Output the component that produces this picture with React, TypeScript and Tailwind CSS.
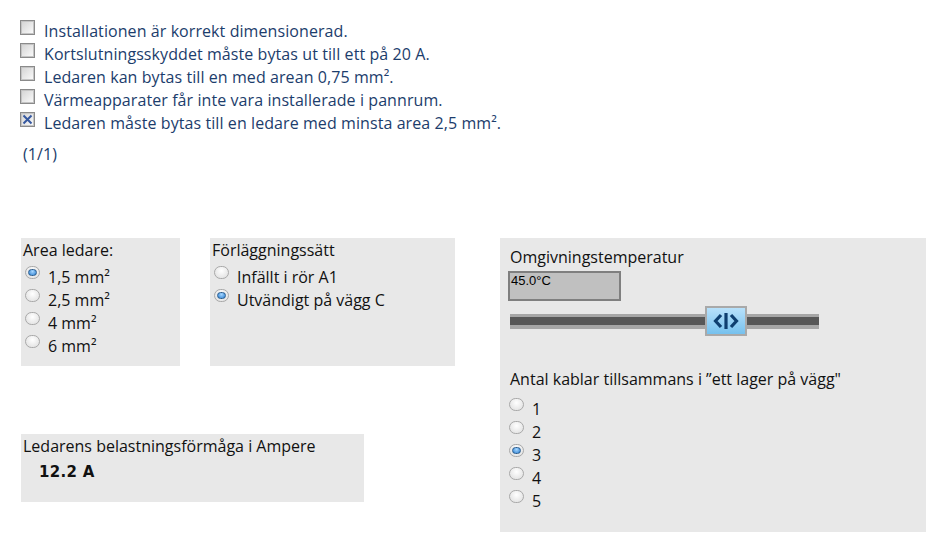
import React from 'react';

const options = [
  { text: 'Installationen är korrekt dimensionerad.', checked: false },
  { text: 'Kortslutningsskyddet måste bytas ut till ett på 20 A.', checked: false },
  { text: 'Ledaren kan bytas till en med arean 0,75 mm².', checked: false },
  { text: 'Värmeapparater får inte vara installerade i pannrum.', checked: false },
  { text: 'Ledaren måste bytas till en ledare med minsta area 2,5 mm².', checked: true },
];

const areas = ['1,5 mm²', '2,5 mm²', '4 mm²', '6 mm²'];
const placements = ['Infällt i rör A1', 'Utvändigt på vägg C'];
const cables = ['1', '2', '3', '4', '5'];

const Checkbox = ({ checked }: { checked: boolean }) => (
  <span className="relative block w-[15px] h-[15px] shrink-0 border border-[#8a8a8a] shadow-[inset_0_0_0_1px_#c4c4c4] bg-[linear-gradient(135deg,#d2d2d2,#fcfcfc)]">
    {checked && (
      <svg viewBox="0 0 13 13" className="absolute inset-0 w-[13px] h-[13px]">
        <path d="M2.5 2.5 L10.5 10.5 M10.5 2.5 L2.5 10.5" stroke="#3558a0" strokeWidth="2" />
      </svg>
    )}
  </span>
);

const Radio = ({ checked }: { checked: boolean }) => (
  <span className="flex items-center justify-center w-[15px] h-[13px] shrink-0 rounded-full border border-[#a9a9a9] bg-[radial-gradient(circle_at_50%_35%,#ffffff,#dcdcdc)]">
    {checked && (
      <span className="block w-[9px] h-[7px] rounded-full border border-[#2b5d8f] bg-[radial-gradient(circle_at_50%_30%,#a6d6ff,#2a7ed0)]" />
    )}
  </span>
);

const RadioRow = ({ label, checked }: { label: string; checked: boolean }) => (
  <div className="flex items-start h-[23px]">
    <span className="block mt-[4px]">
      <Radio checked={checked} />
    </span>
    <span className="ml-[8px] mt-[4px] leading-[23px]">{label}</span>
  </div>
);

const App = () => {
  return (
    <div className="w-[946px] h-[541px] bg-white overflow-hidden font-['Open_Sans',sans-serif] text-[16px]">
      <div className="pt-[20px] pl-[20px] text-[#1c3d6c] tracking-[0.08px]">
        {options.map((o, i) => (
          <div key={i} className="flex items-start h-[23px]">
            <Checkbox checked={o.checked} />
            <span className="ml-[9px] leading-[23px]">{o.text}</span>
          </div>
        ))}
        <div className="mt-[8px] ml-[3px] leading-[23px]">(1/1)</div>
      </div>

      <div className="flex mt-[72px] pl-[21px] text-[#111]">
        <div className="w-[434px]">
          <div className="flex">
            <div className="w-[159px] h-[128px] bg-[#e8e8e8] pl-[2px] pt-[1px]">
              <div className="leading-[23px]">Area ledare:</div>
              <div className="pl-[2px]">
                {areas.map((a, i) => (
                  <RadioRow key={a} label={a} checked={i === 0} />
                ))}
              </div>
            </div>
            <div className="ml-[30px] w-[245px] h-[128px] bg-[#e8e8e8] pl-[2px] pt-[1px]">
              <div className="leading-[23px]">Förläggningssätt</div>
              <div className="pl-[2px]">
                {placements.map((p, i) => (
                  <RadioRow key={p} label={p} checked={i === 1} />
                ))}
              </div>
            </div>
          </div>
          <div className="mt-[68px] w-[343px] h-[68px] bg-[#e8e8e8] pl-[2px] pt-[1px]">
            <div className="leading-[23px]">Ledarens belastningsförmåga i Ampere</div>
            <div className="pl-[16px] mt-[4px] font-['DejaVu_Sans',sans-serif] font-bold text-[15px] leading-[20px] tracking-[0.3px]">
              12.2 A
            </div>
          </div>
        </div>

        <div className="ml-[45px] w-[426px] h-[294px] bg-[#e8e8e8] pl-[10px] pt-[8px]">
          <div className="leading-[23px]">Omgivningstemperatur</div>
          <div className="-ml-[2px] mt-[2px] w-[113px] h-[30px] bg-[#c0c0c0] border-2 border-[#7f7f7f] pl-[1px] font-['Liberation_Sans',sans-serif] text-[13px] leading-[16px] text-black">
            45.0°C
          </div>
          <div className="relative mt-[5px] w-[309px] h-[30px] flex items-center">
            <div className="w-full h-[15px] bg-[#a6a6a6] flex items-center">
              <div className="w-full h-[8px] bg-[#575757]" />
            </div>
            <div className="absolute left-[195px] top-0 w-[42px] h-[30px] border-2 border-[#a9a9a9] bg-[linear-gradient(180deg,#b8e1fb,#76c1ee)] flex items-center justify-center">
              <svg viewBox="0 0 28 18" className="w-[28px] h-[18px]">
                <path d="M9 3 L3.5 9 L9 15" fill="none" stroke="#0e3f70" strokeWidth="3.2" />
                <path d="M19 3 L24.5 9 L19 15" fill="none" stroke="#0e3f70" strokeWidth="3.2" />
                <path d="M14 1 L14 17" stroke="#0e3f70" strokeWidth="3.2" />
              </svg>
            </div>
          </div>
          <div className="mt-[32px] leading-[23px]">Antal kablar tillsammans i ”ett lager på vägg"</div>
          <div className="-ml-[1px] mt-[3px]">
            {cables.map((c, i) => (
              <RadioRow key={c} label={c} checked={i === 2} />
            ))}
          </div>
        </div>
      </div>
    </div>
  );
};

export default App;
